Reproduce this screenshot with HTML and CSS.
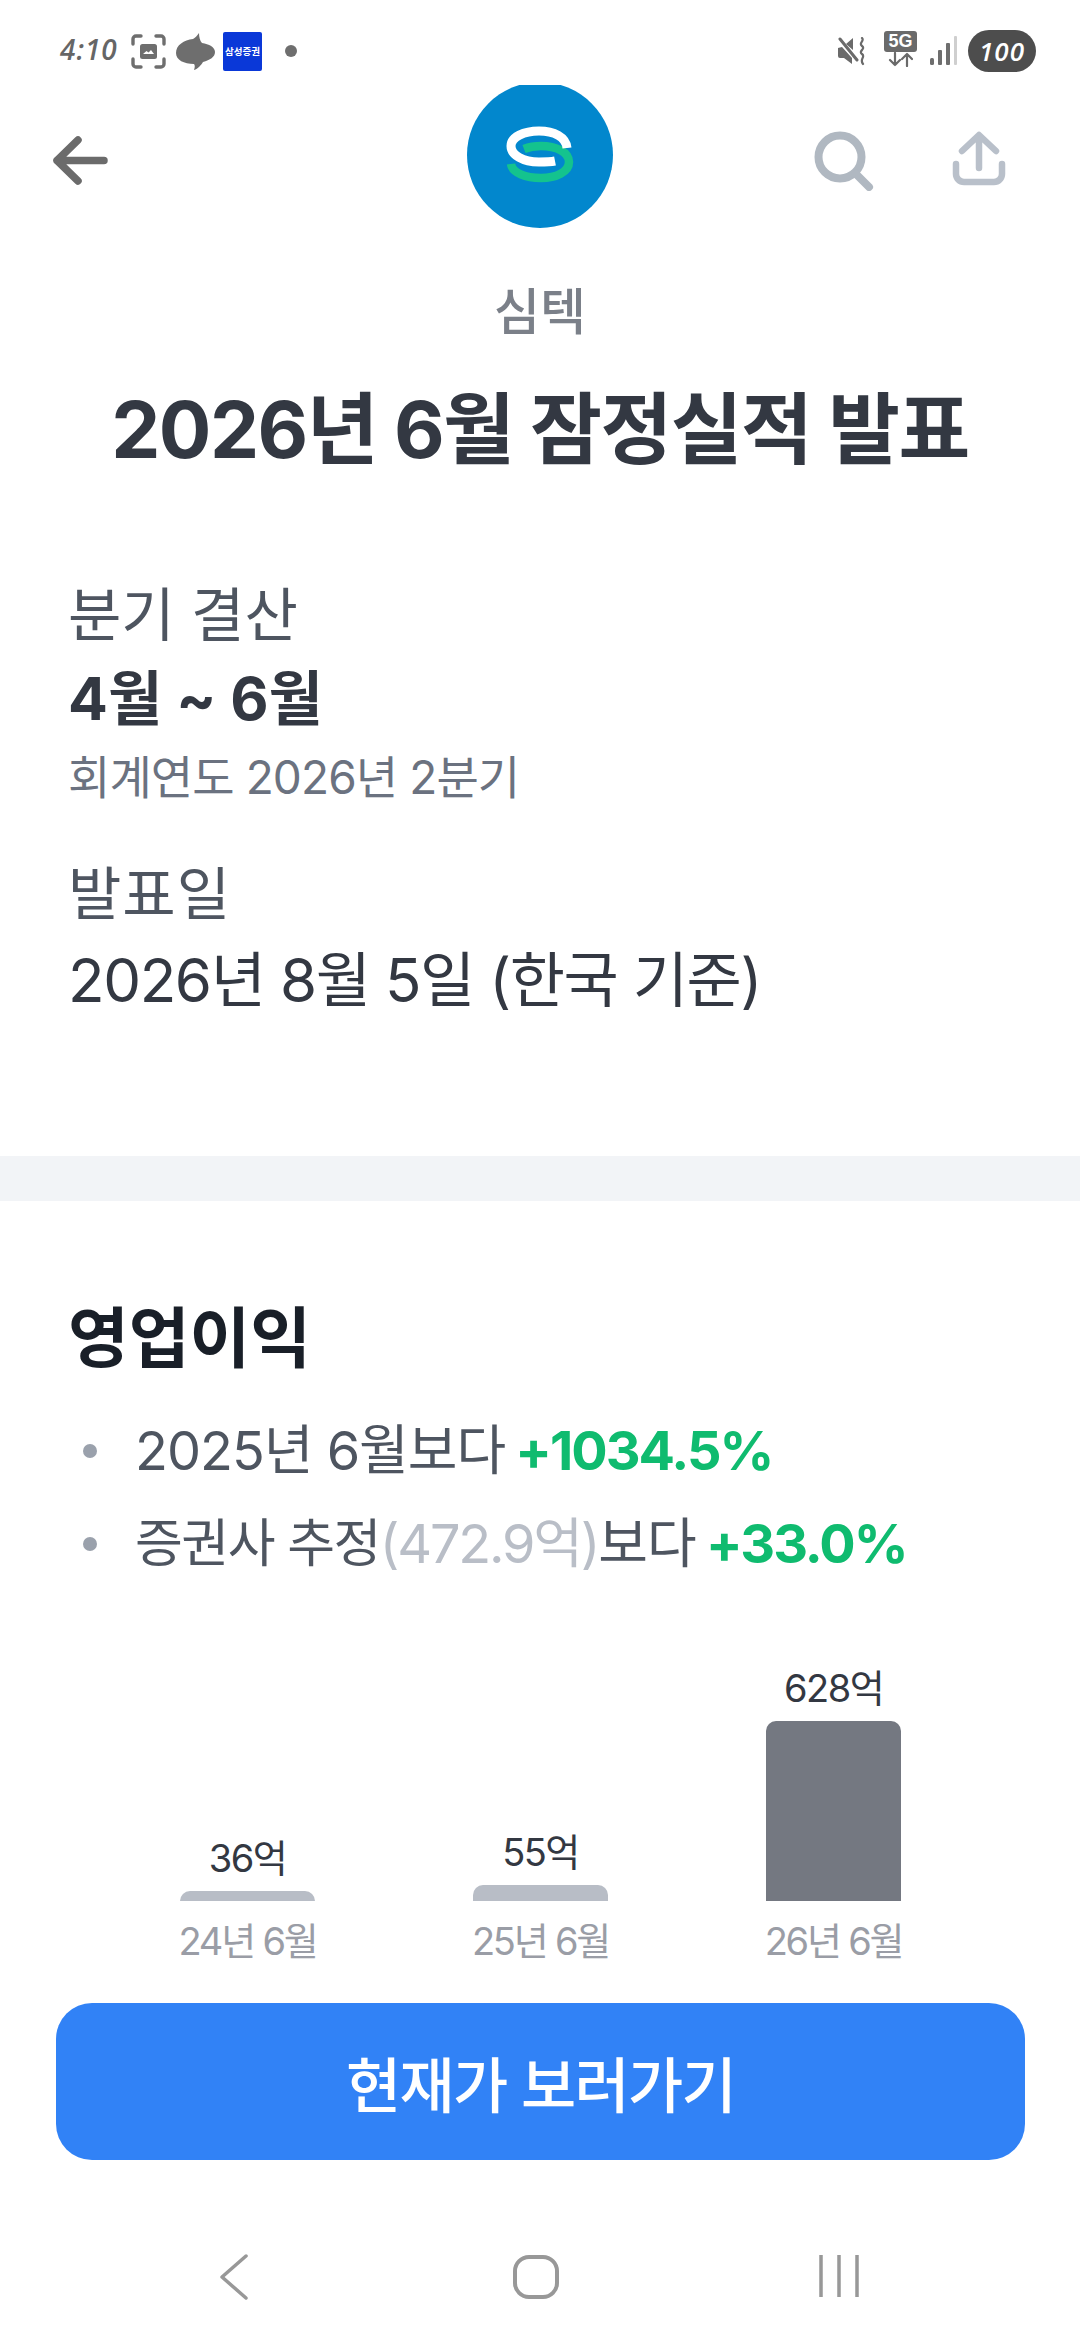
FILE: index.html
```html
<!DOCTYPE html>
<html lang="ko">
<head>
    <meta charset="UTF-8">
    <meta name="viewport" content="width=device-width, initial-scale=1.0">
    <title>심텍 잠정실적 발표</title>
    <link rel="stylesheet" href="styles.css">
</head>
<body>

<!-- Status bar -->
<div class="status-bar">
    <div class="status-left">
        <span class="status-time">4:10</span>
        <svg class="ic-shot" width="35" height="35" viewBox="0 0 35 35" fill="none" stroke="#6e6e6e" stroke-width="3.400" stroke-linecap="round">
            <path d="M2 10V5a3 3 0 0 1 3-3h5M25 2h5a3 3 0 0 1 3 3v5M33 25v5a3 3 0 0 1-3 3h-5M10 33H5a3 3 0 0 1-3-3v-5"/>
            <rect x="9" y="10" width="17" height="15" rx="2.500" fill="#6e6e6e" stroke="none"/>
            <path d="M12 20l3.500-3 2 1.500 2.500-2.500 3 4z" fill="#fff" stroke="none"/>
        </svg>
        <svg class="ic-chat" width="39" height="37" viewBox="0 0 39 37">
            <path d="M23 0C23 4 24 8 26 10C33 11 39 14 39 19C39 24 34 27 27 29C25 32 22 36 18 37C19 34 19 32 18 31C8 31 0 27 0 20C0 12 8 7 17 6C19 5 21 3 23 0Z" fill="#6e6e6e"/>
        </svg>
        <span class="status-tile">삼성증권</span>
        <span class="status-dot"></span>
    </div>
    <div class="status-right">
        <svg class="ic-mute" width="29" height="29" viewBox="0 0 29 29" fill="none">
            <path d="M0 11l4-1 10 11v6l-8-6H2a2 2 0 0 1-2-2zM8 7l7-6v12z" fill="#6a6a6a"/>
            <path d="M2 2l17 21" stroke="#6a6a6a" stroke-width="3" stroke-linecap="round"/>
            <path d="M24 1c3 3-4 5 0 8s-4 5 0 8-3 5 1 10" stroke="#6a6a6a" stroke-width="2.200" stroke-linecap="round"/>
        </svg>
        <div class="ic-fiveg">
            <span class="fiveg-box">5G</span>
            <svg width="25" height="15" viewBox="0 0 25 15" fill="none" stroke="#6a6a6a" stroke-width="2.200" stroke-linecap="round" stroke-linejoin="round">
                <path d="M7 1v12M2 8l5 5 5-5M19 14V2M14 7l5-5 5 5"/>
            </svg>
        </div>
        <svg class="ic-signal" width="27" height="29" viewBox="0 0 27 29">
            <rect x="0" y="22" width="4" height="7" rx="1.500" fill="#6e6e6e"/>
            <rect x="8" y="14" width="4" height="15" rx="1" fill="#6e6e6e"/>
            <rect x="16" y="7" width="4" height="22" rx="1" fill="#6e6e6e"/>
            <rect x="24" y="0" width="3" height="29" rx="1" fill="#cfcfcf"/>
        </svg>
        <span class="status-battery">100</span>
    </div>
</div>

<!-- Top bar -->
<div class="top-bar">
    <svg class="ic-back" width="55" height="49" viewBox="0 0 55 49" fill="none" stroke="#6b6b6b" stroke-width="7.500" stroke-linecap="round" stroke-linejoin="round">
        <path d="M4 24.500h47M25 4L4 24.500 25 45"/>
    </svg>
    <svg class="logo" width="146" height="143" viewBox="0 3 146 143" fill="none">
        <circle cx="73" cy="73" r="73" fill="#0287cd"/>
        <path d="M57 67c5-2 11-3 17-3 15 0 28 6 28 16s-13 16-28 16S45 91 44 82" stroke="#14c38e" stroke-width="8.500"/>
        <path d="M100 66c-1-11-13-17-28-17-15 0-28 6-28 15s12 16 28 16c6 0 11 0 16-1" stroke="#fff" stroke-width="9"/>
    </svg>
    <div class="top-actions">
        <svg width="60" height="60" viewBox="0 0 60 60" fill="none" stroke="#b0b8c1" stroke-width="8" stroke-linecap="round">
            <circle cx="26" cy="26" r="21.500"/>
            <path d="M42 43l13 13"/>
        </svg>
        <svg width="54" height="55" viewBox="0 0 54 55" fill="none" stroke="#b9c0ca" stroke-width="6.500" stroke-linecap="round" stroke-linejoin="round">
            <path d="M27 5v32M10 20L27 4l17 16M4 33v10a8 8 0 0 0 8 8h30a8 8 0 0 0 8-8V33"/>
        </svg>
    </div>
</div>

<!-- Title -->
<p class="company">심텍</p>
<h1 class="page-title">2026년 6월 잠정실적 발표</h1>

<!-- Earnings period -->
<div class="info">
    <p class="info-label">분기 결산</p>
    <p class="info-strong">4월 ~ 6월</p>
    <p class="info-sub">회계연도 2026년 2분기</p>
    <p class="info-label info-label-date">발표일</p>
    <p class="info-value">2026년 8월 5일 (한국 기준)</p>
</div>

<div class="divider"></div>

<!-- Operating profit -->
<div class="profit">
    <h2 class="profit-title">영업이익</h2>
    <ul class="profit-list">
        <li>2025년 6월보다 <b class="up">+1034.5%</b></li>
        <li><span class="tight">증권사 추정</span><span class="muted">(472.9억)</span>보다 <b class="up">+33.0%</b></li>
    </ul>

    <div class="chart">
        <div class="chart-col">
            <span class="chart-value">36억</span>
            <div class="chart-bar" style="height: 10px"></div>
            <span class="chart-label">24년 6월</span>
        </div>
        <div class="chart-col">
            <span class="chart-value">55억</span>
            <div class="chart-bar" style="height: 16px"></div>
            <span class="chart-label">25년 6월</span>
        </div>
        <div class="chart-col">
            <span class="chart-value">628억</span>
            <div class="chart-bar chart-bar-now" style="height: 180px"></div>
            <span class="chart-label">26년 6월</span>
        </div>
    </div>
</div>

<button class="price-button" type="button">현재가 보러가기</button>

<!-- Android navigation -->
<div class="nav-bar">
    <svg class="nav-back" width="28" height="46" viewBox="0 0 28 46" fill="none" stroke="#989898" stroke-width="3.500" stroke-linecap="round" stroke-linejoin="round">
        <path d="M26 2L2 23l24 21"/>
    </svg>
    <svg class="nav-home" width="46" height="44" viewBox="0 0 46 44" fill="none" stroke="#989898" stroke-width="4">
        <rect x="2" y="2" width="42" height="40" rx="14"/>
    </svg>
    <svg class="nav-recent" width="40" height="42" viewBox="0 0 40 42" fill="none" stroke="#989898" stroke-width="3.500">
        <path d="M2 0v42M20 0v42M38 0v42"/>
    </svg>
</div>

</body>
</html>
```

FILE: styles.css
```css
* {
    box-sizing: border-box;
}

body {
    width: 1080px;
    height: 2340px;
    margin: 0;
    overflow: hidden;
    background-color: #fff;
    font-family: Inter, "Noto Sans CJK KR", sans-serif;
    color: #333842;
}

h1, h2, p, ul {
    margin: 0;
    padding: 0;
}

/* Status bar */
.status-bar {
    display: flex;
    justify-content: space-between;
    height: 85px;
    padding: 30px 44px 0 60px;
}

.status-left,
.status-right {
    display: flex;
    align-items: flex-start;
}

.status-time {
    width: 52px;
    margin-top: 4px;
    font-family: "Open Sans", sans-serif;
    font-style: italic;
    font-size: 28px;
    font-weight: 600;
    line-height: 30px;
    color: #666;
    letter-spacing: 1px;
}

.ic-shot {
    margin: 4px 0 0 19px;
}

.ic-chat {
    margin: 3px 0 0 10px;
}

.status-tile {
    width: 39px;
    height: 39px;
    margin: 2px 0 0 8px;
    border-radius: 2px;
    background-color: #0a38d8;
    color: #fff;
    font-size: 9.500px;
    font-weight: 700;
    line-height: 39px;
    text-align: center;
    white-space: nowrap;
}

.status-dot {
    width: 12px;
    height: 12px;
    margin: 15px 0 0 23px;
    border-radius: 50%;
    background-color: #6e6e6e;
}

.ic-mute {
    margin-top: 7px;
}

.ic-fiveg {
    display: flex;
    flex-direction: column;
    align-items: center;
    width: 33px;
    margin: 1px 0 0 17px;
}

.fiveg-box {
    width: 33px;
    height: 21px;
    border-radius: 3px;
    background-color: #6a6a6a;
    color: #fff;
    font-family: "Liberation Sans", sans-serif;
    font-size: 18px;
    font-weight: 700;
    line-height: 21px;
    text-align: center;
}

.ic-signal {
    margin: 6px 0 0 13px;
}

.status-battery {
    width: 68px;
    height: 42px;
    margin-left: 11px;
    border-radius: 21px;
    background-color: #4d4d4d;
    color: #fff;
    font-family: "Open Sans", sans-serif;
    font-style: italic;
    font-size: 26px;
    font-weight: 600;
    line-height: 42px;
    letter-spacing: 1px;
    text-align: center;
}

/* Top bar */
.top-bar {
    display: grid;
    grid-template-columns: 1fr 146px 1fr;
    align-items: start;
    height: 143px;
}

.ic-back {
    margin: 51px 0 0 53px;
}

.top-actions {
    display: flex;
    justify-content: flex-end;
    gap: 78px;
    margin-top: 46px;
    padding-right: 74px;
}

/* Title */
.company {
    margin-top: 54px;
    font-size: 50px;
    font-weight: 500;
    line-height: 60px;
    text-align: center;
    color: #7b8089;
}

.page-title {
    margin-top: 43px;
    font-size: 78px;
    font-weight: 700;
    line-height: 90px;
    text-align: center;
    letter-spacing: -1.500px;
}

/* Earnings period */
.info {
    margin-top: 105px;
    padding: 0 68px;
}

.info-label {
    font-size: 58px;
    line-height: 70px;
    color: #4e5560;
}

.info-label-date {
    margin-top: 52px;
    letter-spacing: 1px;
}

.info-strong {
    margin-top: 14px;
    font-size: 59px;
    font-weight: 700;
    line-height: 70px;
}

.info-sub {
    margin-top: 13px;
    font-size: 46px;
    line-height: 60px;
    letter-spacing: -0.9px;
    color: #6b7280;
}

.info-value {
    margin-top: 16px;
    font-size: 60px;
    line-height: 70px;
    letter-spacing: -1.400px;
}

.divider {
    height: 45px;
    margin-top: 141px;
    background-color: #f2f4f7;
}

/* Operating profit */
.profit {
    padding: 97px 68px 0;
}

.profit-title {
    font-size: 66px;
    font-weight: 700;
    line-height: 80px;
    color: #191f28;
}

.profit-list {
    display: flex;
    flex-direction: column;
    gap: 23px;
    margin-top: 38px;
    list-style: none;
}

.profit-list li {
    display: flex;
    align-items: center;
    font-size: 54px;
    line-height: 70px;
    letter-spacing: -1px;
    color: #4e5560;
    white-space: pre;
}

.profit-list li::before {
    content: "";
    width: 14px;
    height: 14px;
    margin: 0 38px 0 15px;
    border-radius: 50%;
    background-color: #9aa1ac;
}

.up {
    margin-left: -4px;
    font-weight: 700;
    letter-spacing: -2px;
    color: #0fbb6f;
}

.tight {
    font-size: 52px;
    letter-spacing: -1.500px;
}

.muted {
    letter-spacing: -2.200px;
    color: #b9bec7;
}

.chart {
    display: flex;
    align-items: flex-end;
    gap: 158px;
    margin-top: 84px;
    padding-left: 112px;
}

.chart-col {
    display: flex;
    flex-direction: column;
    align-items: center;
    width: 135px;
}

.chart-value {
    margin-bottom: 8px;
    font-size: 38px;
    line-height: 50px;
    letter-spacing: -1.500px;
    white-space: nowrap;
}

.chart-bar {
    width: 100%;
    border-radius: 10px 10px 0 0;
    background-color: #b8bdc6;
}

.chart-bar-now {
    background-color: #747881;
}

.chart-label {
    margin-top: 15px;
    font-size: 38px;
    line-height: 50px;
    letter-spacing: -2.200px;
    color: #9a9da6;
    white-space: nowrap;
}

/* Bottom button */
.price-button {
    display: block;
    width: 969px;
    height: 157px;
    margin: 37px 0 0 56px;
    border: none;
    border-radius: 36px;
    background-color: #3182f6;
    color: #fff;
    font-family: inherit;
    font-size: 60px;
    font-weight: 500;
    letter-spacing: -1.700px;
}

/* Android navigation */
.nav-bar {
    display: flex;
    align-items: flex-start;
    margin-top: 94px;
    padding-left: 220px;
}

.nav-home {
    margin: 1px 0 0 265px;
}

.nav-recent {
    margin: 1px 0 0 260px;
}
```
